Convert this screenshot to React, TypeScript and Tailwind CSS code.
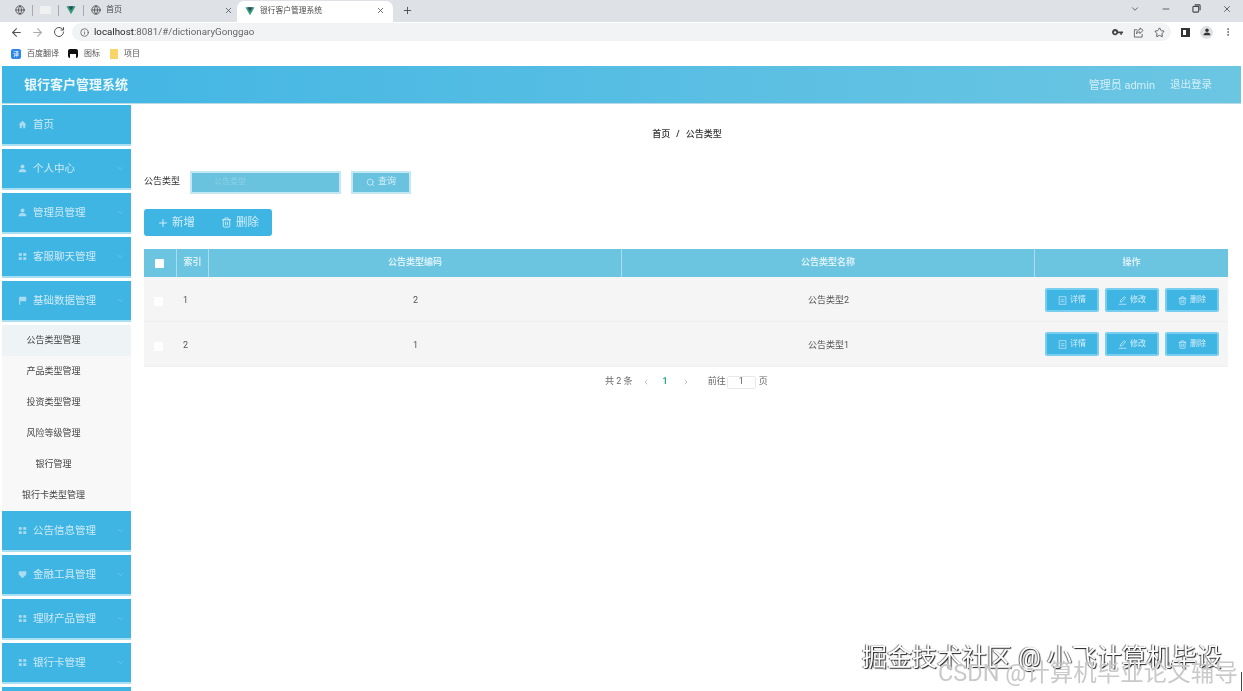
import { ArrowLeft, ArrowRight, ChevronDown, ChevronLeft, ChevronRight, Globe, Info, Minus, MoreVertical, Plus, RotateCw, Search, Star, Trash2, X } from "lucide-react";
import type { ReactNode } from "react";

const VueLogo = ({ size = 11 }: { size?: number }) => (
  <svg width={size} height={size} viewBox="0 0 24 24">
    <path d="M1 3h22L12 22z" fill="#2f9e78" />
    <path d="M6 3h12l-6 10z" fill="#35495e" />
  </svg>
);

const HomeIcon = () => (
  <svg width="9" height="9" viewBox="0 0 12 12" fill="#a9dcef">
    <path d="M6 1 .8 6h1.5v5h2.8V7.5h1.8V11h2.8V6h1.5z" />
  </svg>
);
const UserIcon = () => (
  <svg width="9" height="9" viewBox="0 0 12 12" fill="#a9dcef">
    <circle cx="6" cy="3.4" r="2.6" />
    <path d="M.8 11c0-3 2.2-4.2 5.2-4.2s5.2 1.2 5.2 4.2z" />
  </svg>
);
const UserDark = () => (
  <svg width="8" height="8" viewBox="0 0 12 12" fill="#333">
    <circle cx="6" cy="3.4" r="2.6" />
    <path d="M.8 11c0-3 2.2-4.2 5.2-4.2s5.2 1.2 5.2 4.2z" />
  </svg>
);
const GridIcon = () => (
  <svg width="9" height="9" viewBox="0 0 12 12" fill="#a9dcef">
    <rect x="1" y="1.5" width="4" height="3.6" />
    <rect x="7" y="1.5" width="4" height="3.6" />
    <rect x="1" y="7" width="4" height="3.6" />
    <rect x="7" y="7" width="4" height="3.6" />
  </svg>
);
const FlagIcon = () => (
  <svg width="9" height="9" viewBox="0 0 12 12" fill="#a9dcef">
    <path d="M1.5 1h9.5v6H3v4.5H1.5z" />
  </svg>
);
const ShieldIcon = () => (
  <svg width="9" height="9" viewBox="0 0 12 12" fill="#a9dcef">
    <path d="M1 1.5h10V6l-5 5-5-5z" />
  </svg>
);
const DocIcon = () => (
  <svg width="9" height="9" viewBox="0 0 12 12" fill="none" stroke="#bfe6f4" strokeWidth="1">
    <rect x="1.5" y="1" width="9" height="10" />
    <path d="M3.5 7.5h5M3.5 5h5" />
  </svg>
);
const EditIcon = () => (
  <svg width="9" height="9" viewBox="0 0 12 12" fill="none" stroke="#d3eef8" strokeWidth="1">
    <path d="m3 8 .5-2.2L8.4 1l1.7 1.7-4.9 4.8zM1 11h10" />
  </svg>
);
const KeyIcon = () => (
  <svg width="11" height="7" viewBox="0 0 16 10" fill="#444">
    <path d="M4.5 0a4.5 4.5 0 1 1-4.2 6h0A4.5 4.5 0 0 1 4.5 0zm0 3a1.8 1.8 0 1 0 0 3.6 1.8 1.8 0 0 0 0-3.6z" />
    <path d="M8 3.4h8v2.8h-1.6v2H12v-2H8z" />
  </svg>
);
const ShareIcon = () => (
  <svg width="11" height="11" viewBox="0 0 12 12" fill="none" stroke="#555" strokeWidth="0.9">
    <path d="M4.5 3H1.5v8h8.5V7.5" />
    <path d="M11 3.6 7.6 1v1.8C5 3 3.8 5 3.8 7.5 4.8 6 6 5.4 7.6 5.4v1.7z" />
  </svg>
);
const RestoreIcon = () => (
  <svg width="9" height="9" viewBox="0 0 10 10" fill="none" stroke="#444" strokeWidth="1.2">
    <rect x="1" y="2.6" width="6.4" height="6.4" rx="1" />
    <path d="M3 1h5a1 1 0 0 1 1 1v5" />
  </svg>
);

const SideItem = ({ icon, label, arrow = true }: { icon: ReactNode; label: string; arrow?: boolean }) => (
  <div className="h-[39px] shrink-0 bg-[#3fb5e4] flex items-center pl-4 pr-[6px] text-[10.5px] text-[#cdeaf5] mb-[5px] shadow-[0_2px_0_#a8dff2]">
    <span className="w-[15px] flex">{icon}</span>
    <span className="flex-1">{label}</span>
    {arrow && <ChevronDown size={9} className="text-[#6cc8ea]" />}
  </div>
);

const SubItem = ({ label, active = false }: { label: string; active?: boolean }) => (
  <div className={`h-[31px] shrink-0 flex items-center justify-center pr-[26px] text-[9px] text-[#444] ${active ? "bg-[#eef3f6]" : "bg-[#f8f8f8]"}`}>
    {label}
  </div>
);

const RowBtn = ({ icon, label }: { icon: ReactNode; label: string }) => (
  <button className="w-[54px] h-[24px] bg-[#3fb5e4] border-2 border-[#79cdee] rounded-[2px] flex items-center justify-center gap-[3px] text-[8px] text-[#d3eef8]">
    {icon}
    {label}
  </button>
);

const rows = [
  { idx: 1, code: 2, name: "公告类型2" },
  { idx: 2, code: 1, name: "公告类型1" },
];

export default function App() {
  return (
    <div className="relative h-[691px] w-[1243px] overflow-hidden bg-white font-['Roboto','Noto_Sans_CJK_SC',sans-serif] blur-[0.5px]">
      {/* browser chrome */}
      <div className="h-[22px] bg-[#dee1e6] flex items-end pl-[2px] text-[#4a4a4a]">
        <div className="h-[22px] flex items-center gap-[7px] pl-[13px] pb-[2px] w-[235px] text-[8px]">
          <Globe size={10} />
          <span className="w-px h-[11px] bg-[#aaa]" />
          <span className="w-[11px] h-[8px] bg-[#eef0f2] rounded-[1px]" />
          <span className="w-px h-[11px] bg-[#aaa]" />
          <VueLogo size={10} />
          <span className="w-px h-[11px] bg-[#aaa]" />
          <Globe size={10} />
          <span className="-ml-[2px]">首页</span>
          <X size={9} className="ml-auto mr-[4px]" />
        </div>
        <div className="h-[21px] w-[156px] bg-white rounded-t-[7px] flex items-center pl-[8px] pr-[8px] pb-[2px] gap-[5px] text-[7.75px]">
          <VueLogo size={10} />
          <span>银行客户管理系统</span>
          <X size={9} className="ml-auto" />
        </div>
        <div className="h-[22px] flex items-center pl-[9px] pb-[2px]"><Plus size={11} /></div>
        <div className="ml-auto h-[22px] flex items-center gap-[21px] pr-[11px] pb-[5px]">
          <ChevronDown size={10} />
          <Minus size={10} />
          <RestoreIcon />
          <X size={10} />
        </div>
      </div>
      <div className="h-[20px] flex items-center pl-[10px] pr-[10px] text-[#555]">
        <ArrowLeft size={13} />
        <ArrowRight size={13} className="ml-[8px] text-[#aaa]" />
        <RotateCw size={12} className="ml-[9px]" />
        <div className="ml-[7px] h-[18px] w-[1099px] bg-[#f1f3f4] rounded-full flex items-center pl-[8px] pr-[6px] text-[9.75px] gap-[5px]">
          <Info size={9} />
          <span>
            <span className="text-[#222]">localhost</span>
            <span className="text-[#666]">:8081/#/dictionaryGonggao</span>
          </span>
          <div className="ml-auto flex items-center gap-[10px]">
            <KeyIcon />
            <ShareIcon />
            <Star size={11} />
          </div>
        </div>
        <div className="ml-auto flex items-center gap-[10px]">
          <span className="w-[9px] h-[9px] border-2 border-r-4 border-[#333]" />
          <span className="w-[13px] h-[13px] rounded-full bg-[#dde0e4] flex items-center justify-center"><UserDark /></span>
          <MoreVertical size={10} />
        </div>
      </div>
      <div className="h-[22px] flex items-center pl-[11px] pt-[1px] gap-[6px] text-[8px] text-[#555]">
        <span className="w-[10px] h-[10px] rounded-[2px] bg-[#2a86e8] text-white text-[6px] flex items-center justify-center">译</span>
        <span className="mr-[3px]">百度翻译</span>
        <span className="w-[10px] h-[9px] rounded-[2px] bg-[#111] flex items-end justify-center"><span className="w-[6px] h-[4px] bg-white" /></span>
        <span className="mr-[4px]">图标</span>
        <span className="w-[8px] h-[10px] bg-[#f8d568]" />
        <span>项目</span>
      </div>

      <div className="h-[2px]" />

      {/* app header */}
      <div className="mx-[2px] h-[38px] flex items-center pl-[22px] pr-[29px] bg-gradient-to-r from-[#3fb5e4] to-[#6bc6e2] border-b border-[#b9d9e4]">
        <span className="text-[13px] font-bold text-[#eaf7fc]">银行客户管理系统</span>
        <span className="ml-auto pt-[3px] text-[11px] text-[#d3eef8]">管理员 admin</span>
        <span className="ml-[15px] pt-[1px] text-[10.5px] text-[#d3eef8]">退出登录</span>
      </div>

      <div className="flex pl-[2px] mt-[1px]">
        {/* sidebar */}
        <aside className="w-[129px] shrink-0 flex flex-col">
          <SideItem icon={<HomeIcon />} label="首页" arrow={false} />
          <SideItem icon={<UserIcon />} label="个人中心" />
          <SideItem icon={<UserIcon />} label="管理员管理" />
          <SideItem icon={<GridIcon />} label="客服聊天管理" />
          <SideItem icon={<FlagIcon />} label="基础数据管理" />
          <SubItem label="公告类型管理" active />
          <SubItem label="产品类型管理" />
          <SubItem label="投资类型管理" />
          <SubItem label="风险等级管理" />
          <SubItem label="银行管理" />
          <SubItem label="银行卡类型管理" />
          <SideItem icon={<GridIcon />} label="公告信息管理" />
          <SideItem icon={<ShieldIcon />} label="金融工具管理" />
          <SideItem icon={<GridIcon />} label="理财产品管理" />
          <SideItem icon={<GridIcon />} label="银行卡管理" />
          <SideItem icon={<GridIcon />} label="" arrow={false} />
        </aside>

        {/* main */}
        <main className="flex-1 pl-[13px] pr-[13px] pt-[1px]">
          <div className="h-[56px] flex items-center justify-center text-[9px] font-medium text-[#333] pt-[1px] gap-[6px]">
            <span>首页</span>
            <span className="font-bold">/</span>
            <span>公告类型</span>
          </div>

          <div className="flex items-center h-[24px] mt-[8px]">
            <span className="w-[46px] text-[9px] text-[#333]">公告类型</span>
            <div className="w-[151px] h-[23px] bg-[#69c3df] border-2 border-[#c4e8f3] flex items-center pl-[22px] text-[8px] text-[#8ed0e6]">
              公告类型
            </div>
            <button className="ml-[10px] w-[60px] h-[23px] bg-[#69c3df] border-2 border-[#c4e8f3] flex items-center justify-center gap-[3px] text-[9px] text-[#d3eef8]">
              <Search size={9} />
              查询
            </button>
          </div>

          <div className="flex mt-[15px] h-[27px] w-[128px] rounded-[3px] bg-[#3fb5e4] text-[11.5px] text-[#d3eef8]">
            <button className="w-[64px] flex items-center justify-center gap-[3px]">
              <Plus size={12} />
              新增
            </button>
            <button className="flex-1 flex items-center justify-center gap-[4px]">
              <Trash2 size={11} />
              删除
            </button>
          </div>

          {/* table */}
          <div className="mt-[13px] w-[1084px]">
            <div className="flex h-[28px] bg-[#6bc5e0] text-[9px] font-bold text-[#d9f0f8]">
              <div className="w-[33px] flex items-center justify-center border-r border-[#a9deee]">
                <span className="w-[9px] h-[9px] bg-white rounded-[1px] -ml-[1px]" />
              </div>
              <div className="w-[32px] flex items-center justify-center border-r border-[#a9deee]">索引</div>
              <div className="w-[413px] flex items-center justify-center border-r border-[#a9deee]">公告类型编码</div>
              <div className="w-[413px] flex items-center justify-center border-r border-[#a9deee]">公告类型名称</div>
              <div className="flex-1 flex items-center justify-center">操作</div>
            </div>
            {rows.map((r) => (
              <div key={r.idx} className="flex h-[45px] bg-[#f5f5f5] border-b border-[#efefef] text-[9px] text-[#555]">
                <div className="w-[33px] flex items-center justify-center pt-[4px]">
                  <span className="w-[9px] h-[9px] bg-white rounded-[1px] -ml-[4px]" />
                </div>
                <div className="w-[32px] flex items-center pl-[6px] pt-[4px]">{r.idx}</div>
                <div className="w-[413px] flex items-center justify-center pt-[4px]">{r.code}</div>
                <div className="w-[413px] flex items-center justify-center pt-[4px]">{r.name}</div>
                <div className={`flex-1 flex items-center pl-[10px] gap-[6px] ${r.idx === 1 ? "pt-[2px]" : ""}`}>
                  <RowBtn icon={<DocIcon />} label="详情" />
                  <RowBtn icon={<EditIcon />} label="修改" />
                  <RowBtn icon={<Trash2 size={9} />} label="删除" />
                </div>
              </div>
            ))}
          </div>

          {/* pagination */}
          <div className="mt-[6px] h-[18px] flex items-center pl-[461px] text-[9px] text-[#666]">
            <span>共 2 条</span>
            <ChevronLeft size={8} className="ml-[9px] text-[#aaa]" />
            <span className="ml-[13px] font-bold text-[#2fa98c]">1</span>
            <ChevronRight size={8} className="ml-[14px] text-[#aaa]" />
            <span className="ml-[18px]">前往</span>
            <span className="ml-[1px] w-[29px] h-[13px] border border-[#e8e8e8] rounded-[2px] flex items-center justify-center">1</span>
            <span className="ml-[3px]">页</span>
          </div>
        </main>
      </div>

      {/* watermarks */}
      <div className="absolute left-[862px] top-[642px] text-[25px] leading-[32px] text-white whitespace-nowrap [text-shadow:1px_1px_1px_#222,-1px_0_1px_#666]">
        掘金技术社区 @ 小飞计算机毕设
      </div>
      <div className="absolute left-[938px] top-[657px] text-[23.5px] leading-[32px] text-[#c9c9c9] whitespace-nowrap">
        CSDN @计算机毕业论文辅导
      </div>
      <div className="absolute left-[1241px] top-[672px] w-[1px] h-[19px] bg-[#444]" />
    </div>
  );
}
